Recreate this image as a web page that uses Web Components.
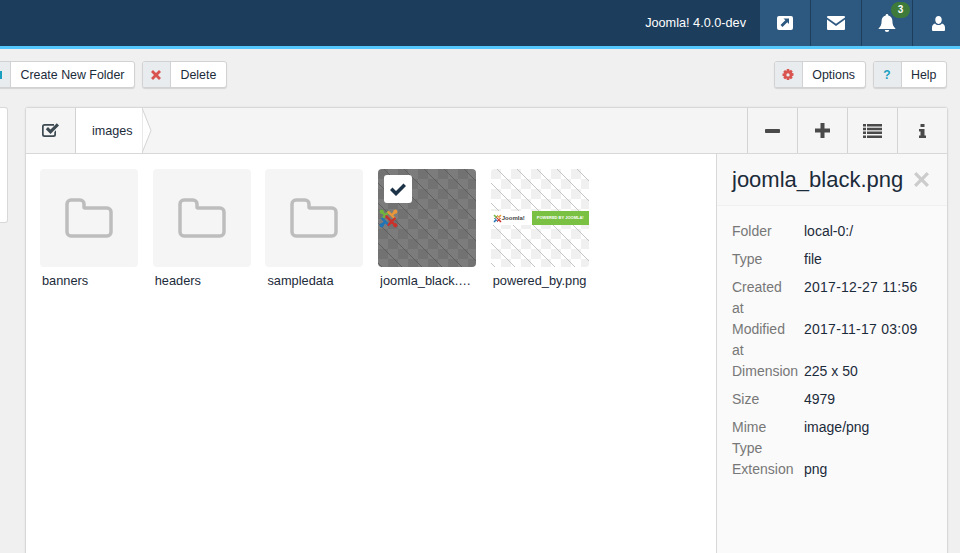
<!DOCTYPE html>
<html lang="en"><head><meta charset="utf-8"><title>Media</title>
<style>
html,body{margin:0;padding:0;height:553px;overflow:hidden;background:#f0f0f0;font-family:"Liberation Sans",Arial,sans-serif;font-size:12px;color:#1c2b3a}
</style></head><body>
<app-header>
  <span slot="version">Joomla! 4.0.0-dev</span>
  <head-btn><svg viewBox="0 0 16 14" width="16" height="14"><path fill="#fff" fill-rule="evenodd" d="M2 0h12a2 2 0 0 1 2 2v10a2 2 0 0 1-2 2H2a2 2 0 0 1-2-2V2a2 2 0 0 1 2-2zM6.500 2.500l1.800 1.800L3.500 9l2 2 4.800-4.700 1.700 1.700V2.500z"/></svg></head-btn>
  <head-btn><svg viewBox="0 0 18 14" width="18" height="14"><path fill="#fff" d="M0 1.400V1a1 1 0 0 1 1-1h16a1 1 0 0 1 1 1v.4L9 7.800zM0 3.600l9 6.400 9-6.400V13a1 1 0 0 1-1 1H1a1 1 0 0 1-1-1z"/></svg></head-btn>
  <head-btn badge="3"><svg viewBox="0 0 18 18" width="18" height="18"><path fill="#fff" d="M9 0a1.300 1.300 0 0 1 1.300 1.400C13 2 14.400 4 14.400 7c0 4 1.100 5.600 3 7.400V15H.6v-.6c1.900-1.800 3-3.400 3-7.400 0-3 1.400-5 4.100-5.600A1.300 1.300 0 0 1 9 0zM6.800 16h4.400a2.200 2 0 0 1-4.400 0z"/></svg></head-btn>
  <head-btn><svg viewBox="0 0 14 16" width="13" height="15"><path fill="#fff" d="M7 0c2.100 0 3.500 1.700 3.500 4S9.100 8.500 7 8.500 3.500 6.300 3.500 4 4.900 0 7 0zM3.300 8c.9 1 2.200 1.700 3.700 1.700S9.800 9 10.700 8c2 .5 3.300 2 3.300 4.500V15a1 1 0 0 1-1 1H1a1 1 0 0 1-1-1v-2.500C0 10 1.300 8.500 3.300 8z"/></svg></head-btn>
</app-header>
<app-toolbar>
  <tool-btn label="Create New Folder"><svg viewBox="0 0 12 12" width="12" height="12"><rect x="1" y="2" width="10" height="8" fill="#1a9fc0"/></svg></tool-btn>
  <tool-btn label="Delete"><svg viewBox="0 0 10 10" width="10" height="10"><path fill="#d9534f" d="M0 2l2-2 3 3 3-3 2 2-3 3 3 3-2 2-3-3-3 3-2-2 3-3z"/></svg></tool-btn>
  <tool-btn slot="right" label="Options"><svg viewBox="0 0 12 12" width="12" height="12"><path fill="#d9534f" fill-rule="evenodd" d="M4.800 0h2.400l.3 1.700 1.500-.9 1.700 1.700-.9 1.500 1.700.3v2.400l-1.700.3.900 1.500-1.700 1.700-1.500-.9-.3 1.700H4.800l-.3-1.700-1.500.9L1.300 8.800l.9-1.500L.5 7V4.600l1.700-.3-.9-1.500L3 1.100l1.500.9zM6 4.300a1.600 1.600 0 1 0 0 3.300 1.600 1.600 0 0 0 0-3.300z"/></svg></tool-btn>
  <tool-btn slot="right" label="Help"><span style="font:bold 12px 'Liberation Sans',sans-serif;color:#1a9fc0">?</span></tool-btn>
</app-toolbar>
<media-manager>
  <media-toolbar slot="bar"></media-toolbar>
  <media-tile slot="tile" name="banners"></media-tile>
  <media-tile slot="tile" name="headers"></media-tile>
  <media-tile slot="tile" name="sampledata"></media-tile>
  <media-tile slot="tile" name="joomla_black.png" kind="black" selected></media-tile>
  <media-tile slot="tile" name="powered_by.png" kind="powered"></media-tile>
  <info-panel slot="info"></info-panel>
</media-manager>
<script>
function def(name,css,html){
  customElements.define(name,class extends HTMLElement{
    constructor(){super();this.attachShadow({mode:'open'});}
    connectedCallback(){this.shadowRoot.innerHTML='<style>'+css+'</style>'+(typeof html==='function'?html(this):html);}
  });
}
def('app-header',
 `:host{display:flex;height:46px;background:#1c3d5c;border-bottom:3px solid #55c8fb;color:#fff;justify-content:flex-end;align-items:stretch;overflow:hidden}
  .v{align-self:center;margin-right:13px;font-size:12.700px;margin-top:-1px}
  .b{display:flex;margin-right:-3px}`,
 `<div class="v"><slot name="version"></slot></div><div class="b"><slot></slot></div>`);
def('head-btn',
 `:host{display:flex;position:relative;width:50px;height:46px;align-items:center;justify-content:center;background:#2d5880;border-left:1px solid #1c3d5c}
  :host(:first-child){border-left:0}
  .badge{position:absolute;top:2px;left:29px;width:19px;height:16px;border-radius:8px;background:#3e7b3b;color:#fff;font:bold 10px/15px "Liberation Sans",sans-serif;text-align:center}
  .i{display:flex}`,
 h=>`<span class="i"><slot></slot></span>`+(h.getAttribute('badge')?`<span class="badge">${h.getAttribute('badge')}</span>`:''));
def('app-toolbar',
 `:host{display:flex;justify-content:space-between;padding:12px 13px 0 0;height:28px}
  .l,.r{display:flex;gap:7px}.l{margin-left:-18px}`,
 `<div class="l"><slot></slot></div><div class="r"><slot name="right"></slot></div>`);
def('tool-btn',
 `:host{display:inline-flex;height:27px;box-sizing:border-box;border:1px solid #d2d2d2;border-radius:3px;background:#fff;box-shadow:0 1px 1px rgba(0,0,0,.12);color:#1c2b3a;font-size:12.400px}
  .i{width:27px;display:flex;align-items:center;justify-content:center;background:#e9ecef;border-right:1px solid #d2d2d2;border-radius:2px 0 0 2px}
  .t{padding:0 9.500px;line-height:26px}`,
 h=>`<span class="i"><slot></slot></span><span class="t">${h.getAttribute('label')}</span>`);
def('media-manager',
 `:host{display:flex;margin-top:18px;height:460px;align-items:flex-start}
  .side{flex:none;width:8px;height:116px;background:#fff;border:1px solid #d8d8d8;border-left:0;box-sizing:border-box;border-radius:0 3px 3px 0;margin-right:17px}
  .card{flex:none;width:923px;height:460px;box-sizing:border-box;background:#fff;border:1px solid #d8d8d8;border-radius:3px 3px 0 0;box-shadow:0 0 2px rgba(0,0,0,.08);display:flex;flex-direction:column}
  .body{display:flex;flex:1}
  .grid{flex:1;display:grid;grid-template-columns:repeat(auto-fill,112.700px);padding:15px 0 0 14px;align-content:start}`,
 `<div class="side"></div><div class="card"><slot name="bar"></slot><div class="body"><div class="grid"><slot name="tile"></slot></div><slot name="info"></slot></div></div>`);
def('media-toolbar',
 `:host{display:flex;height:46px;box-sizing:border-box;background:#f5f5f5;border-bottom:1px solid #d8d8d8;flex:none}
  .c{width:49px;display:flex;align-items:center;justify-content:center;border-right:1px solid #d3d3d3}
  .crumb{position:relative;background:#fff;width:66px;box-sizing:border-box;line-height:46px;padding-left:16px;font-size:12.600px;color:#1c2b3a;height:45px}
  .crumb svg{position:absolute;left:66px;top:0}
  .sp{flex:1}
  .t{width:49px;display:flex;align-items:center;justify-content:center;border-left:1px solid #d3d3d3}`,
 `<div class="c"><svg width="18" height="15" viewBox="0 0 18 15"><path fill="#3d4a52" d="M2.500 1H12v1.700H2.800a1.100 1.100 0 0 0-1.100 1.100v7.400a1.100 1.100 0 0 0 1.100 1.100h8.400a1.100 1.100 0 0 0 1.100-1.100V9L14 7.300v4.200A2.500 2.500 0 0 1 11.500 14h-9A2.500 2.500 0 0 1 0 11.500v-8A2.500 2.500 0 0 1 2.500 1z"/><path fill="#3d4a52" d="M3.800 6.200 6 4l2.500 2.500L14.800.2 17 2.400 8.500 10.900z"/></svg></div>
  <div class="crumb">images<svg width="10" height="45" viewBox="0 0 10 45"><path d="M0 0 9 22.500 0 45z" fill="#fff" stroke="#d3d3d3"/></svg></div>
  <div class="sp"></div>
  <div class="t"><svg width="15" height="4" viewBox="0 0 15 4"><rect width="15" height="4" rx=".8" fill="#4a4a4a"/></svg></div>
  <div class="t"><svg width="15" height="15" viewBox="0 0 15 15"><path fill="#4a4a4a" d="M5.500 0h4v5.500H15v4H9.500V15h-4V9.500H0v-4h5.500z"/></svg></div>
  <div class="t"><svg width="19" height="14" viewBox="0 0 19 14"><path fill="#4a4a4a" d="M0 0h3v2.500H0zM4 0h15v2.500H4zM0 3.800h3v2.500H0zM4 3.800h15v2.500H4zM0 7.600h3v2.500H0zM4 7.600h15v2.500H4zM0 11.400h3v2.600H0zM4 11.400h15v2.600H4z"/></svg></div>
  <div class="t"><svg width="7" height="14" viewBox="0 0 7 14"><path fill="#4a4a4a" d="M1.500 0h4v3h-4zM0 5h5.500v6.500H7V14H0v-2.500h1.500V7.500H0z"/></svg></div>`);
const thumbPattern=(id,base,a,line,w)=>`<svg width="98" height="98" viewBox="0 0 98 98" style="display:block"><defs>
  <pattern id="c${id}" width="20" height="20" patternUnits="userSpaceOnUse"><rect width="20" height="20" fill="${base}"/><rect width="10" height="10" fill="${a}"/><rect x="10" y="10" width="10" height="10" fill="${a}"/></pattern>
  <pattern id="l${id}" x="6" width="20" height="20" patternUnits="userSpaceOnUse"><path d="M-5 -5 25 25M-5 15 5 25M15 -5 25 5" stroke="${line}" stroke-width="${w}" fill="none"/></pattern></defs>
  <rect width="98" height="98" fill="url(#c${id})"/><rect width="98" height="98" fill="url(#l${id})"/></svg>`;
const jlogo=`<g fill="none" stroke-linecap="round" stroke-width="2.300">
 <path stroke="#6fb53e" d="M3.500 3.500 7 7M4 10l6-6"/><path stroke="#e8973a" d="M16.500 3.500 13 7M10 4l6 6"/><path stroke="#1f74b5" d="M3.500 16.500 7 13M4 10l6 6"/><path stroke="#c9322c" d="M16.500 16.500 13 13M16 10l-6 6M8 8l5 5"/></g>
 <circle cx="3.500" cy="3.500" r="2" fill="#6fb53e"/><circle cx="16.500" cy="3.500" r="2" fill="#e8973a"/><circle cx="3.500" cy="16.500" r="2" fill="#1f74b5"/><circle cx="16.500" cy="16.500" r="2" fill="#c9322c"/>`;
def('media-tile',
 `:host{display:block;width:98px;font-size:12.800px;color:#1c2b3a}
  .th{position:relative;width:98px;height:98px;border-radius:4px;overflow:hidden;background:#f5f5f5;display:flex;align-items:center;justify-content:center}
  .chk{position:absolute;left:6px;top:6px;width:28px;height:28px;background:#fff;border-radius:3px;display:flex;align-items:center;justify-content:center}
  .over{position:absolute;left:0;top:42px;display:flex;width:98px;height:14px;background:#fff}
  .j{width:41px;font:bold 6px/14px "Liberation Sans",sans-serif;color:#444;padding-left:11px;box-sizing:border-box;position:relative}
  .g{flex:1;background:#7ac143;color:#fff;font:bold 4px/14px "Liberation Sans",sans-serif;text-align:center;white-space:nowrap}
  .n{margin:6px 2px 0;line-height:15px;white-space:nowrap;overflow:hidden;text-overflow:ellipsis;height:15px}
  .logo{position:absolute;left:0;top:39px}
  .jl{position:absolute;left:2px;top:3px}`,
 h=>{const k=h.getAttribute('kind');let inner;
  if(k==='black') inner=thumbPattern('b','#7c7c7c','#727272','#5e5e5e',1)+`<svg class="logo" width="21" height="21" viewBox="0 0 20 20">${jlogo}</svg>`;
  else if(k==='powered') inner=thumbPattern('p','#ffffff','#f0f0f0','#c4c4c4',1)+`<div class="over"><div class="j"><svg class="jl" width="9" height="9" viewBox="0 0 20 20">${jlogo}</svg>Joomla!</div><div class="g">POWERED BY JOOMLA!</div></div>`;
  else inner=`<svg width="48" height="40" viewBox="0 0 48 40"><path fill="none" stroke="#bdbdbd" stroke-width="3.500" stroke-linejoin="round" d="M6 2h9a4 4 0 0 1 4 4v3a1 1 0 0 0 1 1h22a4 4 0 0 1 4 4v20a4 4 0 0 1-4 4H6a4 4 0 0 1-4-4V6a4 4 0 0 1 4-4z"/></svg>`;
  const chk=h.hasAttribute('selected')?`<div class="chk"><svg width="16" height="13" viewBox="0 0 16 13"><path fill="#1c3348" d="M0 7l2.500-2.500 3.500 3.500L13.500 .5 16 3 6 13z"/></svg></div>`:'';
  return `<div class="th">${inner}${chk}</div><div class="n">${h.getAttribute('name')}</div>`;});
def('info-panel',
 `:host{display:block;width:231px;flex:none;background:#fafafa;border-left:1px solid #d8d8d8;box-sizing:border-box;height:100%}
  .h{height:52px;box-sizing:border-box;padding:0 18px 0 15px;display:flex;align-items:center;justify-content:space-between;font-size:22px;color:#1c2b3a;background:#f8f8f8;border-bottom:1px solid #f0f0f0;white-space:nowrap}
  .h svg{flex:none}
  dl{margin:15px 0 0;padding:0 0 0 15px;display:grid;grid-template-columns:72px 1fr;font-size:14px;line-height:21px}
  dt{color:#777}
  dd{margin:0;color:#1c2b3a}
  dt,dd{padding-bottom:7px}
  .t{padding-bottom:0}
  .d{letter-spacing:.25px}`,
 `<div class="h"><span>joomla_black.png</span><svg width="15" height="15" viewBox="0 0 16 16"><path fill="#ccc" d="M2.500 0 8 5.500 13.500 0 16 2.500 10.500 8 16 13.500 13.500 16 8 10.500 2.500 16 0 13.500 5.500 8 0 2.500z"/></svg></div>
 <dl><dt>Folder</dt><dd>local-0:/</dd><dt>Type</dt><dd>file</dd><dt class="t">Created<br>at</dt><dd class="t d">2017-12-27 11:56</dd><dt class="t">Modified<br>at</dt><dd class="t d">2017-11-17 03:09</dd><dt>Dimension</dt><dd>225 x 50</dd><dt>Size</dt><dd>4979</dd><dt class="t">Mime<br>Type</dt><dd class="t">image/png</dd><dt>Extension</dt><dd>png</dd></dl>`);
</script>
</body></html>
